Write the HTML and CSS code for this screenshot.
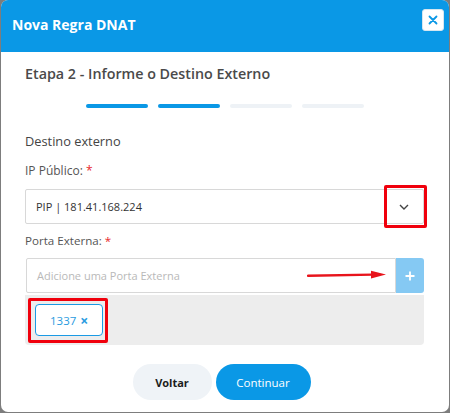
FILE: index.html
```html
<!DOCTYPE html>
<html lang="pt-BR">
<head>
<meta charset="utf-8">
<title>Nova Regra DNAT</title>
<link rel="stylesheet" href="styles.css">
</head>
<body>
<div class="modal">
  <header class="modal-header">
    <h1 class="modal-title">Nova Regra DNAT</h1>
    <button class="close-btn" aria-label="Fechar">
      <svg width="10" height="10" viewBox="0 0 10 10"><path d="M1.5 1.5 L8.5 8.5 M8.5 1.5 L1.5 8.5" stroke="#0a98e6" stroke-width="1.8" stroke-linecap="round"/></svg>
    </button>
  </header>
  <div class="modal-body">
    <h2 class="step-title">Etapa 2 - Informe o Destino Externo</h2>
    <div class="steps">
      <span class="step done"></span>
      <span class="step done"></span>
      <span class="step"></span>
      <span class="step"></span>
    </div>
    <p class="section">Destino externo</p>

    <label class="field-label">IP Público: <span class="req">*</span></label>
    <div class="select">
      <span class="select-value">PIP | 181.41.168.224</span>
      <span class="select-arrow">
        <svg width="10" height="6" viewBox="0 0 10 6"><path d="M1 1 L5 5 L9 1" fill="none" stroke="#444" stroke-width="1.4"/></svg>
      </span>
      <span class="highlight hl-arrow"></span>
    </div>

    <label class="field-label field-label-tight">Porta Externa: <span class="req">*</span></label>
    <div class="add-row">
      <div class="add-input">
        <span class="placeholder">Adicione uma Porta Externa</span>
        <svg class="pointer" width="80" height="10" viewBox="0 0 80 10"><path d="M1 5.8 L66 4.6" stroke="#e8141c" stroke-width="2.4" stroke-linecap="round"/><path d="M64 0.8 L79 4.4 L64 8.4 Z" fill="#e8141c"/></svg>
      </div>
      <button class="add-btn" aria-label="Adicionar">
        <svg width="10" height="10" viewBox="0 0 10 10"><path d="M5 0.5 V9.5 M0.5 5 H9.5" stroke="#fff" stroke-width="1.8"/></svg>
      </button>
    </div>
    <div class="tags">
      <span class="tag">1337 <span class="tag-x">×</span></span>
      <span class="highlight hl-tag"></span>
    </div>

    <div class="actions">
      <button class="btn btn-back">Voltar</button>
      <button class="btn btn-next">Continuar</button>
    </div>
  </div>
</div>
</body>
</html>
```

FILE: styles.css
```css
* { box-sizing: border-box; }

html, body {
  margin: 0;
  padding: 0;
  background: #7d7d7d;
  font-family: "Open Sans", "Noto Sans", sans-serif;
}

.modal {
  width: 448px;
  height: 412px;
  margin-left: 1px;
  background: #fff;
  border-radius: 7px;
  overflow: hidden;
}

.modal-header {
  height: 52px;
  background: #0a98e6;
  display: flex;
  align-items: flex-start;
  justify-content: space-between;
  padding: 0 5px 0 11px;
}

.modal-title {
  margin: 15px 0 0;
  font-size: 14px;
  font-weight: 700;
  color: #fff;
  line-height: 20px;
}

.close-btn {
  margin-top: 9px;
  width: 22px;
  height: 22px;
  padding: 0;
  border: 1px solid #d6e6f0;
  border-radius: 3px;
  background: #fff;
  display: flex;
  align-items: center;
  justify-content: center;
}

.modal-body {
  padding: 12px 25px 0 24px;
}

.step-title {
  margin: 0;
  font-size: 14.3px;
  font-weight: 600;
  color: #4a4a4a;
  line-height: 20px;
}

.steps {
  display: flex;
  justify-content: center;
  gap: 10px;
  margin: 20px 0 0;
}

.step {
  width: 62px;
  height: 4px;
  border-radius: 2px;
  background: #eef2f6;
}

.step.done { background: #0a98e6; }

.section {
  margin: 24px 0 0;
  font-size: 12.8px;
  color: #444;
  line-height: 18px;
}

.field-label {
  display: block;
  margin-top: 12px;
  font-size: 12px;
  color: #555;
  line-height: 18px;
}

.field-label-tight {
  margin-top: 8px;
  font-size: 11.6px;
}

.req { color: #e8262b; }

.select {
  position: relative;
  margin-top: 9px;
  height: 35px;
  border: 1px solid #d8d8d8;
  border-radius: 2px;
  display: flex;
  align-items: center;
  justify-content: space-between;
  padding: 0 14px 0 10px;
}

.select-value {
  font-size: 11px;
  color: #333;
}

.select-arrow {
  display: flex;
}

.highlight {
  position: absolute;
  border: 3px solid #f0000c;
  border-radius: 2px;
}

.hl-arrow {
  right: -4px;
  top: -5px;
  width: 43px;
  height: 43px;
}

.add-row {
  margin-top: 8px;
  display: flex;
  height: 35px;
}

.add-input {
  flex: 1;
  border: 1px solid #d8d8d8;
  border-radius: 2px 0 0 2px;
  display: flex;
  align-items: center;
  justify-content: space-between;
  padding: 0 8px 0 10px;
  margin-left: 1px;
}

.placeholder {
  font-size: 11px;
  color: #b9b9b9;
}

.pointer { display: block; margin-top: -2px; }

.add-btn {
  width: 28px;
  padding: 0;
  border: 0;
  background: #85c9f3;
  border-radius: 0 3px 3px 0;
  display: flex;
  align-items: center;
  justify-content: center;
}

.tags {
  position: relative;
  margin-top: 2px;
  height: 50px;
  background: #ededed;
  border-radius: 0 0 4px 4px;
  padding: 9px 10px;
}

.tag {
  display: inline-flex;
  align-items: center;
  gap: 4px;
  height: 32px;
  padding: 0 14px;
  background: #fff;
  border: 1px solid #1b9ae4;
  border-radius: 4px;
  font-size: 11.5px;
  color: #2a9be0;
}

.tag-x { font-size: 14px; font-weight: 700; }

.hl-tag {
  left: 3px;
  top: 3px;
  width: 80px;
  height: 45px;
}

.actions {
  display: flex;
  justify-content: center;
  gap: 4px;
  margin-top: 19px;
  padding-right: 6px;
}

.btn {
  height: 36px;
  border: 0;
  border-radius: 18px;
  font-family: inherit;
  font-size: 11px;
}

.btn-back {
  width: 79px;
  background: #eff3f7;
  color: #1c1c1c;
  font-weight: 700;
}

.btn-next {
  width: 95px;
  background: #0a98e6;
  color: #fff;
  font-size: 11.5px;
}
```
